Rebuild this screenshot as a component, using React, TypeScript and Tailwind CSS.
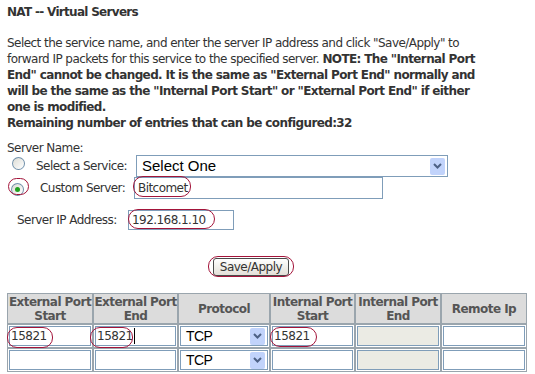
import React from 'react';

const body = { fontFamily: '"DejaVu Sans", Verdana, sans-serif' };
const arial = { fontFamily: '"Liberation Sans", Arial, sans-serif' };

function Radio({ checked }: { checked?: boolean }) {
  return (
    <span className="inline-flex h-[13px] w-[13px] items-center justify-center rounded-full border border-[#1c5180]/60 bg-gradient-to-br from-[#dcdcd5] to-white">
      {checked && <span className="h-[5px] w-[5px] rounded-full bg-[#21a121]" />}
    </span>
  );
}

function Arrow() {
  return (
    <span className="flex h-[17px] w-[15px] items-center justify-center rounded-[2px] bg-[#c1d3fb]">
      <svg width="9" height="6" viewBox="0 0 9 6">
        <path d="M1 1 L4.5 4.5 L8 1" stroke="#4d6185" strokeWidth="2" fill="none" />
      </svg>
    </span>
  );
}

function Ellipse({ l, t, w, h }: { l: number; t: number; w: number; h: number }) {
  return (
    <span
      className="pointer-events-none absolute rounded-[10px] border-[1.5px] border-[#a3143a]"
      style={{ left: l, top: t, width: w, height: h }}
    />
  );
}

const cols = [86, 85, 92, 85, 86, 86];
const heads = [
  ['External Port', 'Start'],
  ['External Port', 'End'],
  ['Protocol'],
  ['Internal Port', 'Start'],
  ['Internal Port', 'End'],
  ['Remote Ip'],
];

function Row({ vals }: { vals: string[] }) {
  return (
    <div className="flex">
      {cols.map((w, i) => (
        <div key={i} style={{ width: w }} className="h-[24px] border border-[#9aa5ad] bg-white p-px">
          {i === 2 ? (
            <div className="flex h-full items-center justify-between border border-[#7f9db9] pl-[5px] pr-[2px] text-[14px] text-black" style={arial}>
              TCP
              <Arrow />
            </div>
          ) : (
            <div
              className={`flex h-full items-center border border-[#7f9db9] pl-[1px] text-[12px] tracking-[-0.5px] text-[#333] ${i === 4 ? 'bg-[#ebebe4]' : 'bg-white'}`}
            >
              {vals[i]}
              {i === 1 && vals[i] && <span className="ml-[1px] h-[16px] w-px bg-black" />}
            </div>
          )}
        </div>
      ))}
    </div>
  );
}

export default function App() {
  return (
    <div className="relative h-[374px] w-[535px] overflow-hidden bg-white text-[#333]" style={body}>
      <div className="pl-[7px] pt-[4px]">
        <h1 className="text-[12px] font-bold leading-[16px] tracking-[-0.7px] text-[#333]">NAT -- Virtual Servers</h1>
        <p className="mt-[15px] whitespace-nowrap text-[12px] leading-[16px] tracking-[-0.55px]">
          Select the service name, and enter the server IP address and click "Save/Apply" to
          <br />
          forward IP packets for this service to the specified server. <b className="tracking-[-0.62px]">NOTE: The "Internal Port</b>
          <br />
          <b className="tracking-[-0.62px]">End" cannot be changed. It is the same as "External Port End" normally and</b>
          <br />
          <b className="tracking-[-0.62px]">will be the same as the "Internal Port Start" or "External Port End" if either</b>
          <br />
          <b className="tracking-[-0.62px]">one is modified.</b>
          <br />
          <b className="tracking-[-0.62px]">Remaining number of entries that can be configured:32</b>
        </p>

        <div className="mt-[9px] text-[12px] leading-[16px] tracking-[-0.55px]">Server Name:</div>

        <div className="mt-[-1px] flex h-[22px] items-center text-[12px] tracking-[-0.55px]">
          <span className="ml-[5px]"><Radio /></span>
          <span className="ml-[11px] w-[100px]">Select a Service:</span>
          <div className="flex h-[22px] w-[312px] items-center justify-between border border-[#7f9db9] pl-[5px] pr-[2px] text-[15px] tracking-normal text-black" style={arial}>
            Select One
            <Arrow />
          </div>
        </div>

        <div className="flex h-[22px] items-center text-[12px] tracking-[-0.55px]">
          <span className="ml-[4px]"><Radio checked /></span>
          <span className="ml-[16px] w-[94px]">Custom Server:</span>
          <div className="flex h-[22px] w-[249px] items-center border border-[#7f9db9] pl-[3px] text-[12px] text-[#333]">Bitcomet</div>
        </div>

        <div className="mt-[11px] flex h-[20px] items-center text-[12px] tracking-[-0.55px]">
          <span className="ml-[10px] w-[111px]">Server IP Address:</span>
          <div className="flex h-[20px] w-[106px] items-center border border-[#7f9db9] pl-[3px] text-[#333]">192.168.1.10</div>
        </div>

        <div className="mt-[28px] flex justify-center pr-[40px]">
          <button className="h-[18px] w-[76px] rounded-[3px] border border-[#4a4a4a] bg-gradient-to-b from-white to-[#e3e0d8] text-[12px] leading-[14px] tracking-[-0.5px] text-[#333]">
            Save/Apply
          </button>
        </div>

        <div className="mt-[17px] text-[12px] tracking-[-0.55px]">
          <div className="flex">
            {heads.map((h, i) => (
              <div
                key={i}
                style={{ width: cols[i] }}
                className="flex h-[31px] flex-col items-center justify-center border border-[#9aa5ad] bg-[#dcdcdc] font-bold leading-[14px] text-[#555]"
              >
                {h.map((s) => (
                  <span key={s}>{s}</span>
                ))}
              </div>
            ))}
          </div>
          <Row vals={['15821', '15821', '', '15821', '', '']} />
          <Row vals={['', '', '', '', '', '']} />
        </div>
      </div>

      <Ellipse l={8} t={178} w={21} h={17} />
      <Ellipse l={133} t={176} w={58} h={21} />
      <Ellipse l={128} t={209} w={87} h={20} />
      <Ellipse l={208} t={256} w={86} h={21} />
      <Ellipse l={7} t={327} w={46} h={21} />
      <Ellipse l={90} t={327} w={43} h={21} />
      <Ellipse l={270} t={327} w={47} h={20} />
    </div>
  );
}
